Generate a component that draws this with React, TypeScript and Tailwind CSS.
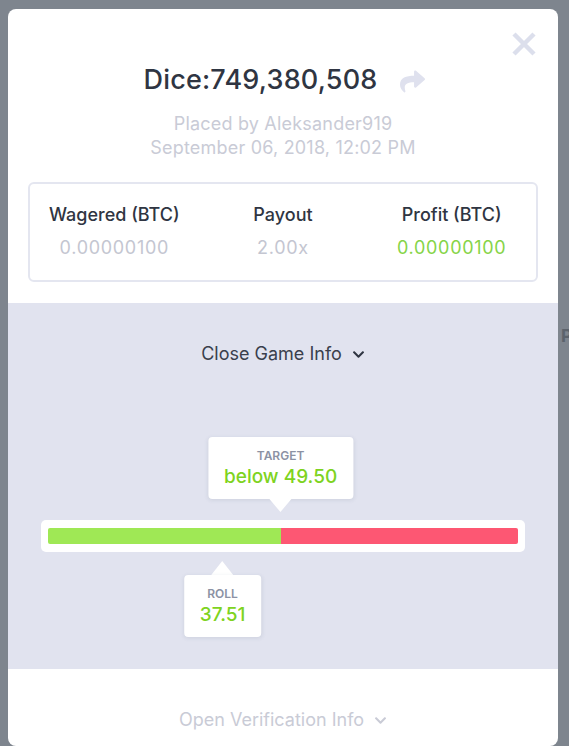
import { FaShare, FaChevronDown } from 'react-icons/fa'

const TARGET = 49.5
const ROLL = 37.51

function Tooltip({ label, value, arrow }: { label: string; value: string; arrow: 'up' | 'down' }) {
  return (
    <div className="flex flex-col items-center">
      {arrow === 'up' && (
        <div className="w-0 h-0 border-x-[11px] border-x-transparent border-b-[14px] border-b-white" />
      )}
      <div className="bg-white rounded-[4px] shadow-[0_1px_4px_rgba(60,70,100,0.12)] px-4 pt-[10px] pb-[10px] flex flex-col items-center">
        <span className="text-[12px] leading-[18px] font-semibold text-[#8c92a4]">{label}</span>
        <span className="text-[19px] leading-[24px] font-medium text-[#7ed321] whitespace-nowrap">{value}</span>
      </div>
      {arrow === 'down' && (
        <div className="w-0 h-0 border-x-[11px] border-x-transparent border-t-[13px] border-t-white" />
      )}
    </div>
  )
}

export default function App() {
  return (
    <div className="w-[569px] h-[746px] overflow-hidden bg-[#7e858e] flex pl-[8px] pt-[9px] font-['Inter','Liberation_Sans',sans-serif]">
      <div className="w-[550px] shrink-0 bg-white rounded-[8px] flex flex-col relative">
        {/* close */}
        <button className="absolute top-[23px] right-[22px] w-6 h-6" aria-label="Close">
          <svg width="24" height="24" viewBox="0 0 24 24">
            <path d="M2 2 L22 22 M22 2 L2 22" stroke="#dcdfec" strokeWidth="4.5" />
          </svg>
        </button>

        {/* header */}
        <div className="pt-[55px] flex flex-col items-center shrink-0">
          <div className="flex items-center h-8 ml-[2px]">
            <h2 className="text-[27px] leading-8 font-medium text-[#2f3542] tracking-[0.2px]">Dice:749,380,508</h2>
            <FaShare className="ml-[22px] mt-[2px] text-[#dfe1ee]" size={25} />
          </div>
          <div className="mt-4 flex flex-col items-center text-[18px] leading-6 text-[#c9cbd6] tracking-[0.2px]">
            <span>Placed by Aleksander919</span>
            <span>September 06, 2018, 12:02 PM</span>
          </div>
        </div>

        {/* stats */}
        <div className="px-5 mt-[22px] mb-[21px] shrink-0">
          <div className="border-2 border-[#e4e6f0] rounded-[6px] grid grid-cols-3 text-center pt-[19px] pb-[20px]">
            <div className="flex flex-col">
              <span className="text-[18px] leading-6 font-medium text-[#2f3542]">Wagered (BTC)</span>
              <span className="mt-[9px] text-[18px] leading-6 text-[#c4c6d1] tracking-[0.7px]">0.00000100</span>
            </div>
            <div className="flex flex-col">
              <span className="text-[18px] leading-6 font-medium text-[#2f3542]">Payout</span>
              <span className="mt-[9px] text-[18px] leading-6 text-[#c4c6d1] tracking-[0.7px]">2.00x</span>
            </div>
            <div className="flex flex-col">
              <span className="text-[18px] leading-6 font-medium text-[#2f3542]">Profit (BTC)</span>
              <span className="mt-[9px] text-[18px] leading-6 text-[#86d447] tracking-[0.7px]">0.00000100</span>
            </div>
          </div>
        </div>

        {/* game info */}
        <div className="bg-[#e1e3ef] h-[366px] shrink-0 flex flex-col items-center pt-[39px]">
          <button className="flex items-center gap-[10px] text-[18px] leading-6 text-[#3a3f4c]">
            Close Game Info
            <FaChevronDown size={13} className="text-[#2f3542]" />
          </button>

          <div className="self-stretch mx-[33px] mt-[154px] relative">
            <div className="absolute bottom-full mb-[8px] -translate-x-1/2" style={{ left: `${TARGET}%` }}>
              <Tooltip label="TARGET" value={`below ${TARGET.toFixed(2)}`} arrow="down" />
            </div>
            <div className="bg-white rounded-[5px] px-[7px] py-[8px]">
              <div className="h-4 flex rounded-[2px] overflow-hidden">
                <div className="bg-[#9fe855]" style={{ width: `${TARGET}%` }} />
                <div className="flex-1 bg-[#fd5773]" />
              </div>
            </div>
            <div className="absolute top-full mt-[9px] -translate-x-1/2" style={{ left: `${ROLL}%` }}>
              <Tooltip label="ROLL" value={ROLL.toFixed(2)} arrow="up" />
            </div>
          </div>
        </div>

        {/* verification */}
        <div className="flex justify-center pt-[39px] pb-10 shrink-0">
          <button className="flex items-center gap-[10px] text-[18px] leading-6 text-[#c9cbd6]">
            Open Verification Info
            <FaChevronDown size={13} />
          </button>
        </div>
      </div>
      <div className="ml-[3px] pt-[315px] text-[18px] font-bold text-[#5c636c] leading-6">P</div>
    </div>
  )
}
